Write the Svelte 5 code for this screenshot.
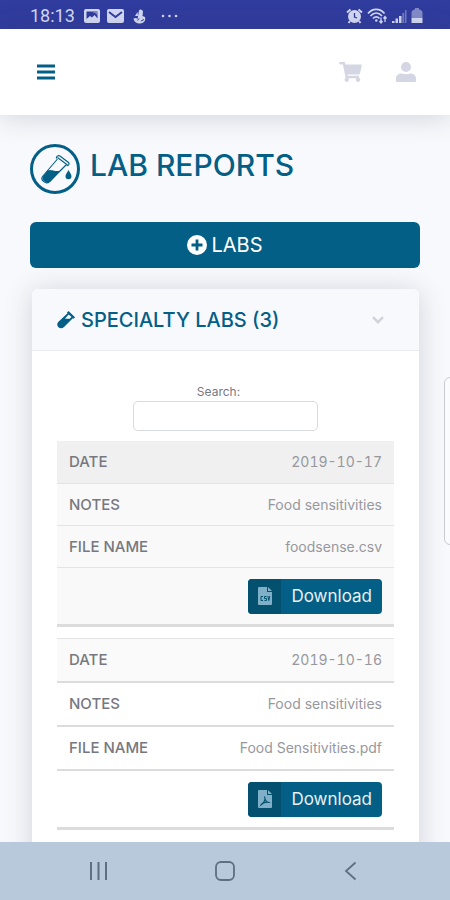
<script>
    let search = '';

    const reports = [
        { date: '2019-10-17', notes: 'Food sensitivities', file: 'foodsense.csv', type: 'csv' },
        { date: '2019-10-16', notes: 'Food sensitivities', file: 'Food Sensitivities.pdf', type: 'pdf' }
    ];

    $: visible = reports.filter((r) =>
        (r.date + r.notes + r.file).toLowerCase().includes(search.toLowerCase())
    );
</script>

<div class="screen">
    <div class="status-bar">
        <span class="clock">18:13</span>
        <svg width="16" height="14" viewBox="0 0 16 14">
            <rect width="16" height="14" rx="2" fill="currentColor" />
            <path d="M2.5 2.5h11v7l-3-3.5-2.5 2.5-2-1.500-3.500 3z" fill="#303c9e" />
            <path d="M8 3h5.500v3l-2.500-2z" fill="currentColor" opacity=".5" />
        </svg>
        <svg class="mail" width="17" height="14" viewBox="0 0 17 14">
            <rect width="17" height="14" rx="2" fill="currentColor" />
            <path d="M2 3l6.500 5L15 3" fill="none" stroke="#303c9e" stroke-width="1.8" />
        </svg>
        <svg class="hand" width="13" height="15" viewBox="0 0 13 15">
            <path d="M6 1.500a2.200 2.200 0 0 1 4 1.200L9.500 7l2.500 1c1 3-1 6.500-5 6.500C3.500 14.500.8 12.500.5 9.500L3 9l1.500 1z" fill="currentColor" />
            <path d="M6 9.500l-1.500 2M8 12l3-1.500" stroke="#303c9e" stroke-width="1" fill="none" />
            <path d="M4.500 3L2 7h3z" fill="currentColor" />
        </svg>
        <svg class="dots" width="17" height="4" viewBox="0 0 17 4" fill="currentColor">
            <circle cx="2" cy="2" r="1.3" />
            <circle cx="8.500" cy="2" r="1.300" />
            <circle cx="15" cy="2" r="1.300" />
        </svg>
        <div class="status-right">
            <svg width="17" height="16" viewBox="0 0 17 16">
                <circle cx="8.500" cy="8.500" r="6.500" fill="currentColor" />
                <path d="M8.500 5v4l2.500 1" fill="none" stroke="#303c9e" stroke-width="1.300" />
                <path d="M1 4.500L4.500 1.500M16 4.500L12.500 1.500M4 13l-1.500 2M13 13l1.500 2" stroke="currentColor" stroke-width="2" />
            </svg>
            <svg width="21" height="16" viewBox="0 0 21 16" fill="none" stroke="currentColor">
                <path d="M1 5.500C5.500 0 13 0 17.500 5.500M3.500 8c3.500-4 8-4 11.500 0M6 10.500c2-2.200 4.500-2.200 6.500 0" stroke-width="1.700" />
                <circle cx="9.300" cy="12.500" r="1.300" fill="currentColor" stroke="none" />
                <path d="M14 9.500v5M12.500 13l1.500 2 1.500-2M18 14V9M16.500 10.500L18 8.500l1.500 2" stroke-width="1.300" />
            </svg>
            <svg width="15" height="15" viewBox="0 0 15 15" fill="currentColor">
                <path d="M0 12h2.500v2H0zM3.500 9.500H6V14H3.500zM7 7h2.500v7H7z" />
                <path d="M10.300 4h2v10h-2zM13 1h1.500v13H13z" opacity=".4" />
            </svg>
            <svg width="12" height="16" viewBox="0 0 12 16" fill="currentColor">
                <path d="M4 0h4v1.500c2 0 3.500 1.500 3.500 3V10H.5V4.500c0-1.500 1.500-3 3.500-3z" opacity=".5" />
                <path d="M.5 10h11v5H.5z" />
            </svg>
        </div>
    </div>

    <header>
        <button class="icon-button menu" aria-label="Menu">
            <svg width="18" height="16" viewBox="0 0 18 16">
                <path d="M0 2h18M0 8h18M0 14h18" stroke="currentColor" stroke-width="2.800" />
            </svg>
        </button>
        <button class="icon-button" aria-label="Cart">
            <svg width="23" height="20" viewBox="0 0 576 512" fill="currentColor">
                <path d="M528.120 301.319l47.273-208C578.806 78.301 567.391 64 551.990 64H159.208l-9.166-44.810C147.758 8.021 137.930 0 126.529 0H24C10.745 0 0 10.745 0 24v16c0 13.255 10.745 24 24 24h69.883l70.248 343.435C147.325 417.100 136 435.222 136 456c0 30.928 25.072 56 56 56s56-25.072 56-56c0-15.674-6.447-29.835-16.824-40h209.647C430.447 426.165 424 440.326 424 456c0 30.928 25.072 56 56 56s56-25.072 56-56c0-22.172-12.888-41.332-31.579-50.405l5.517-24.276c3.413-15.018-8.002-29.319-23.403-29.319H218.117l-6.545-32h293.145c11.206 0 20.920-7.754 23.403-18.681z" />
            </svg>
        </button>
        <button class="icon-button" aria-label="Account">
            <svg width="20" height="20" viewBox="0 0 20 20" fill="currentColor">
                <circle cx="10" cy="5" r="5" />
                <path d="M0 19v-2.500C0 13.500 2.500 11.500 5.500 11.500c3 1 6 1 9 0 3 0 5.500 2 5.500 5V19a1 1 0 0 1-1 1H1a1 1 0 0 1-1-1z" />
            </svg>
        </button>
    </header>

    <main>
        <div class="title">
            <svg width="50" height="50" viewBox="0 0 50 50" fill="none" stroke="currentColor">
                <circle cx="25" cy="25" r="23.500" stroke-width="3" />
                <path d="M27.500 13.500l10 7.500M27.500 15L12.500 32.500c-2.500 3.500 3.500 8.500 7 5L36 21" stroke-width="1.100" />
                <path d="M26.500 14.500c-.5-2 1.500-3.500 3.500-2.500l8.500 6.500c1.500 1.500 0 3.500-2 3" stroke-width="1.200" />
                <path d="M17.500 26.500c4-2 7 2 13 0L20.500 37.500c-3.500 3-10-1.500-7.500-5z" fill="currentColor" stroke="none" />
                <path d="M38.500 26c1.500 3 3 4.500 3 6.300a3 3 0 0 1-6 0c0-1.800 1.500-3.300 3-6.300z" fill="currentColor" stroke="none" />
            </svg>
            <h1>LAB REPORTS</h1>
        </div>

        <button class="add-labs">
            <svg width="20" height="20" viewBox="0 0 20 20">
                <circle cx="10" cy="10" r="10" fill="currentColor" />
                <path d="M10 4.500v11M4.500 10h11" stroke="#045f87" stroke-width="2.800" />
            </svg>
            LABS
        </button>

        <section class="card">
            <div class="card-header">
                <svg width="18" height="18" viewBox="0 0 18 18">
                    <path d="M11.500 0L18 6.300l-1.300 1.500-.9-.5L7 16c-3.500 3.500-9-1.300-5.800-5L10.500 2.300 10 1.500z" fill="currentColor" />
                    <path d="M11.700 3.500L8 7.700h4.700l1.800-1.700z" fill="#f8f9fd" />
                </svg>
                <h2>SPECIALTY LABS (3)</h2>
                <button class="icon-button toggle" aria-label="Collapse">
                    <svg width="12" height="8" viewBox="0 0 12 8">
                        <path d="M1 1.200l5 5 5-5" fill="none" stroke="currentColor" stroke-width="2.500" />
                    </svg>
                </button>
            </div>
            <div class="card-body">
                <div class="search">
                    <label for="search">Search:</label>
                    <input id="search" type="search" bind:value={search} />
                </div>
                <table>
                    <tbody>
                        {#each visible as report, i}
                            <tr class:striped={i % 2 === 0}>
                                <td class="date"><span class="name">DATE</span>{report.date}</td>
                                <td><span class="name">NOTES</span>{report.notes}</td>
                                <td><span class="name">FILE NAME</span>{report.file}</td>
                                <td class="actions">
                                    <button class="download">
                                        <span class="file-icon">
                                            <svg width="14" height="18" viewBox="0 0 14 18">
                                                <path d="M1 0h8v5h5v12a1 1 0 0 1-1 1H1a1 1 0 0 1-1-1V1a1 1 0 0 1 1-1zM10 0l4 4h-4z" fill="currentColor" />
                                                {#if report.type === 'csv'}
                                                    <path d="M5 9.500H3v4h2M8.500 9.500H6.500v2h2v2h-2M9.800 9l1 4.500 1-4.500" fill="none" stroke="#04506f" />
                                                {:else}
                                                    <path d="M6.500 6.500c1.500 3-1 7-3.500 8.500 1-2 5-3.500 8-2.500-2 .5-4-2-4.500-6z" fill="none" stroke="#04506f" stroke-width="1.100" />
                                                {/if}
                                            </svg>
                                        </span>
                                        <span class="download-text">Download</span>
                                    </button>
                                </td>
                            </tr>
                        {/each}
                    </tbody>
                </table>
            </div>
        </section>
        <div class="edge-handle"></div>
    </main>

    <nav>
        <button class="icon-button" aria-label="Recent apps">
            <svg width="20" height="20" viewBox="0 0 20 20">
                <path d="M2 1v18M9.500 1v18M17 1v18" stroke="currentColor" stroke-width="2" />
            </svg>
        </button>
        <button class="icon-button" aria-label="Home">
            <svg width="20" height="20" viewBox="0 0 20 20">
                <rect x="1" y="1" width="18" height="18" rx="5" fill="none" stroke="currentColor" stroke-width="1.800" />
            </svg>
        </button>
        <button class="icon-button" aria-label="Back">
            <svg width="20" height="20" viewBox="0 0 20 20">
                <path d="M14.500 1.500L5 10l9.500 8.500" fill="none" stroke="currentColor" stroke-width="1.800" />
            </svg>
        </button>
    </nav>
</div>

<style>
    :global(body) {
        margin: 0;
    }
    .screen {
        display: flex;
        flex-direction: column;
        height: 100vh;
        overflow: hidden;
        background: #f8f9fd;
        color: #77787f;
        font-family: Inter, 'Open Sans', sans-serif;
        font-size: 14px;
    }
    svg {
        display: block;
        flex-shrink: 0;
    }
    button,
    input {
        font-family: inherit;
        box-sizing: border-box;
    }
    .icon-button {
        padding: 0;
        border: none;
        background: none;
        color: inherit;
    }
    .status-bar {
        display: flex;
        align-items: center;
        flex-shrink: 0;
        height: 29px;
        box-sizing: border-box;
        padding: 3px 27px 0 30px;
        background: #303c9e;
        color: #d3d8f4;
    }
    .clock {
        margin-right: 9px;
        font-family: Roboto, sans-serif;
        font-size: 18px;
        line-height: 26px;
    }
    .mail {
        margin: 0 9px 0 7px;
    }
    .dots {
        margin-left: 15px;
    }
    .status-right {
        display: flex;
        align-items: center;
        gap: 4px;
        margin-left: auto;
    }
    header {
        display: flex;
        align-items: center;
        gap: 34px;
        flex-shrink: 0;
        height: 86px;
        box-sizing: border-box;
        padding: 0 34px 0 37px;
        background: #fff;
        color: #d5d6e3;
        box-shadow: 0 2px 28px rgba(58, 59, 69, 0.2);
        z-index: 1;
    }
    .menu {
        margin-right: auto;
        color: #045f87;
    }
    main {
        position: relative;
        flex: 1;
        min-height: 0;
        overflow: hidden;
        padding: 29px 30px 0;
    }
    .title {
        display: flex;
        gap: 10px;
        color: #045f87;
    }
    h1 {
        margin: 0;
        font-size: 30px;
        line-height: 43px;
        font-weight: 500;
    }
    .add-labs {
        display: flex;
        align-items: center;
        justify-content: center;
        gap: 4px;
        width: 100%;
        height: 46px;
        margin: 28px 0 21px;
        border: none;
        border-radius: 6px;
        background: #045f87;
        color: #fff;
        font-size: 20px;
    }
    .card {
        margin: 0 1px 0 2px;
        border-radius: 6px;
        background: #fff;
        box-shadow: 0 2px 28px rgba(58, 59, 69, 0.2);
    }
    .card-header {
        display: flex;
        align-items: center;
        gap: 6px;
        height: 62px;
        box-sizing: border-box;
        padding: 0 35px 0 25px;
        border-bottom: 1px solid #e8eaf1;
        border-radius: 6px 6px 0 0;
        background: #f8f9fd;
        color: #045f87;
    }
    h2 {
        margin: 0;
        font-size: 20px;
        line-height: 28px;
        font-weight: 500;
    }
    .toggle {
        margin-left: auto;
        color: #d1d3da;
    }
    .card-body {
        padding: 32px 25px;
    }
    .search {
        display: flex;
        flex-direction: column;
        align-items: center;
        margin-bottom: 10px;
    }
    .search label {
        margin-right: 14px;
        font-size: 12px;
        line-height: 18px;
    }
    .search input {
        width: 185px;
        height: 30px;
        border: 1px solid #d9dadf;
        border-radius: 5px;
        background: #fff;
    }
    table,
    tbody {
        display: block;
    }
    tr {
        display: block;
        margin-bottom: 11px;
        border-bottom: 3px solid #dcdcdc;
    }
    tr + tr {
        border-top: 1px solid #e4e4e4;
    }
    td {
        display: flex;
        align-items: center;
        justify-content: space-between;
        padding: 0 12px;
        border-bottom: 2px solid #dcdcdc;
        color: #97989e;
        line-height: 42px;
    }
    .date {
        background: #fafafa;
        font-variant-numeric: tabular-nums;
    }
    .striped td {
        border-bottom: 1px solid #e4e4e4;
        background: #f9f9f9;
        line-height: 41px;
    }
    .striped .date {
        background: #f0f0f0;
        line-height: 42px;
    }
    .name {
        color: #77787f;
        font-size: 15px;
        font-weight: 500;
    }
    td.actions,
    .striped td.actions {
        justify-content: flex-end;
        height: 56px;
        border-bottom: none;
    }
    .download {
        display: flex;
        align-items: center;
        height: 35px;
        padding: 0;
        overflow: hidden;
        border: none;
        border-radius: 4px;
        background: #045f87;
        color: #e8f1f6;
        font-size: 17px;
    }
    .file-icon {
        display: flex;
        align-items: center;
        justify-content: center;
        width: 33px;
        height: 35px;
        background: #04506f;
        color: #7fb0c8;
    }
    .download-text {
        padding: 0 10px;
    }
    .edge-handle {
        position: absolute;
        top: 262px;
        right: -6px;
        width: 10px;
        height: 166px;
        border: 1px solid #c9cbd0;
        border-radius: 6px;
        background: #fafbfd;
    }
    nav {
        display: flex;
        align-items: center;
        justify-content: space-around;
        flex-shrink: 0;
        height: 58px;
        padding: 0 36px;
        background: #b7c9da;
        color: #5e6f80;
        z-index: 1;
    }
</style>
